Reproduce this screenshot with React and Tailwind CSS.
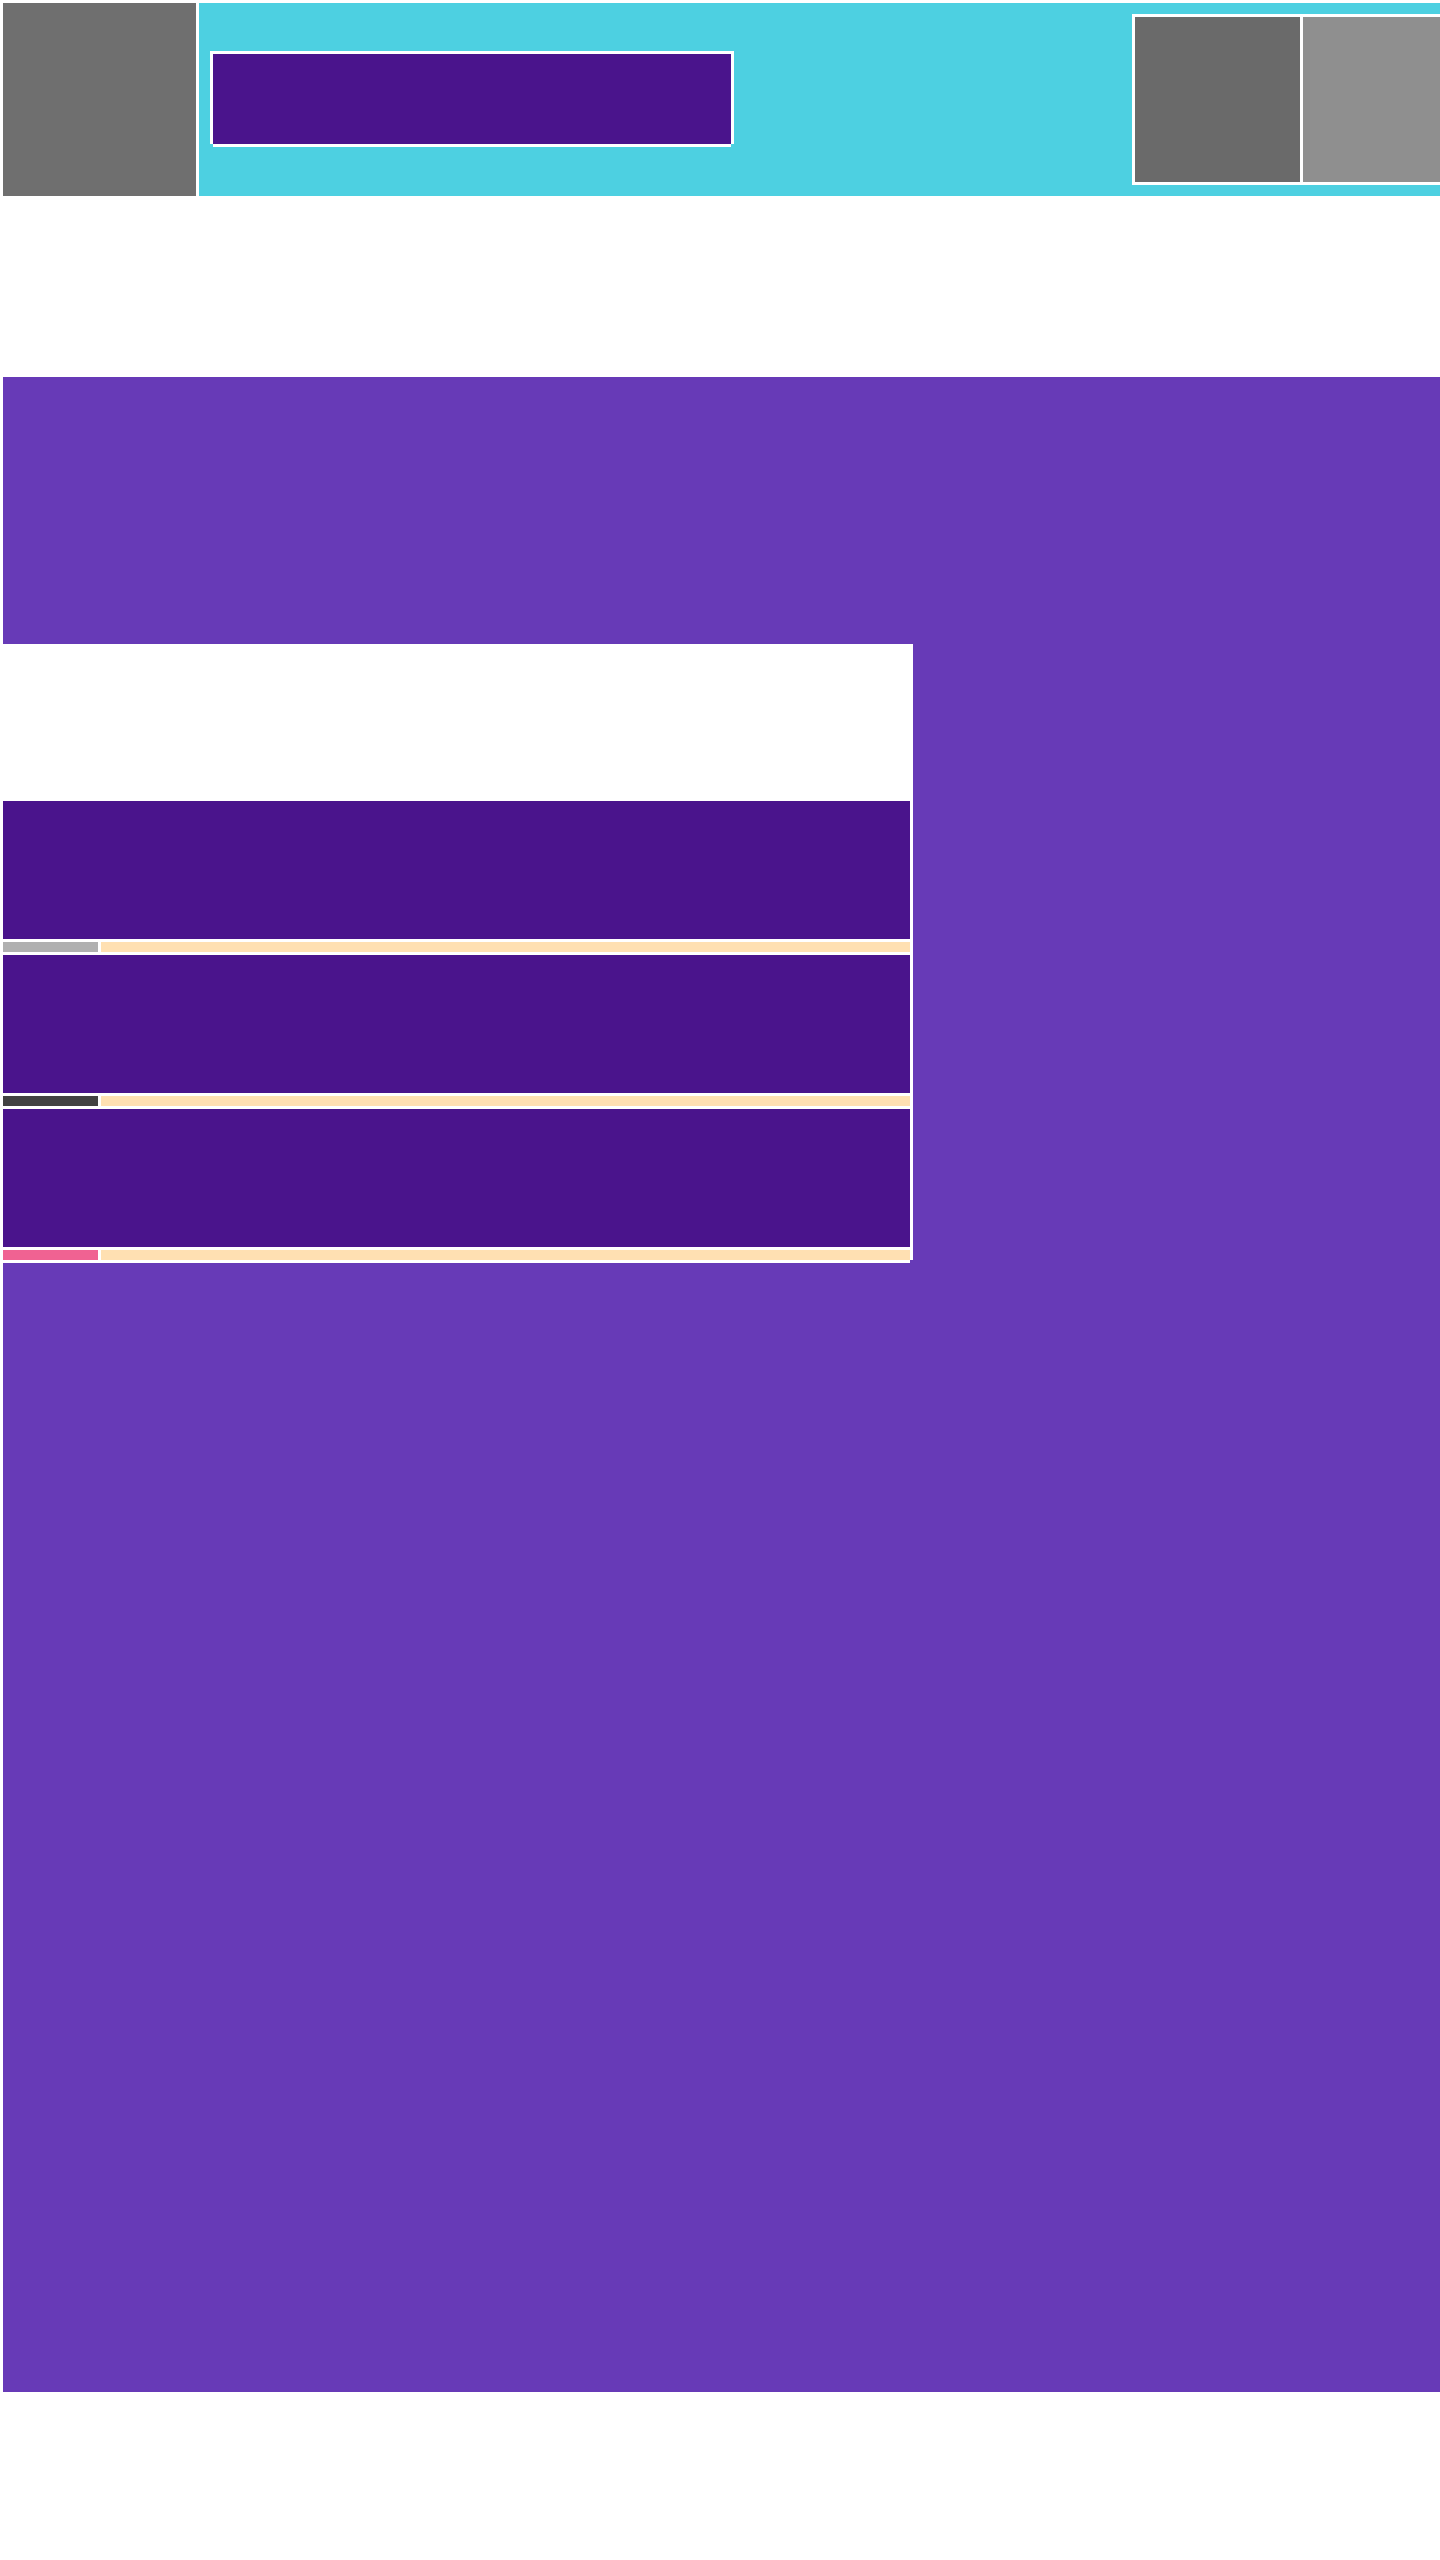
export default function App() {
  return (
    <div className="w-[1440px] overflow-hidden bg-white pl-[3px] pt-[3px] pb-[168px]">
      <Header />
      <div className="h-[181px]" />
      <Section />
    </div>
  );
}

function Header() {
  return (
    <header className="flex h-[193px] gap-[3px]">
      <div className="w-[193px] shrink-0 bg-[#6f6f6f]" />
      <div className="flex flex-1 items-start overflow-hidden bg-[#4dd0e1]">
        {/* search-ish box */}
        <div className="ml-[11px] mt-[48px] h-[93px] w-[524px] shrink-0 bg-white px-[3px] pt-[3px]">
          <div className="h-[93px] border-b-[3px] border-white bg-[#4a148c]" />
        </div>
        {/* right thumbnails */}
        <div className="ml-[398px] mt-[11px] flex shrink-0 gap-[3px] border-[3px] border-white bg-white">
          <div className="h-[165px] w-[165px] bg-[#6a6a6a]" />
          <div className="h-[165px] w-[165px] bg-[#8f8f8f]" />
        </div>
      </div>
    </header>
  );
}

const rows = [
  { tag: "bg-[#b0b0b0]" },
  { tag: "bg-[#424242]" },
  { tag: "bg-[#f06292]" },
];

function Section() {
  return (
    <section className="h-[2015px] bg-[#673ab7] pt-[267px]">
      <div className="h-[616px] w-[910px] bg-white pr-[3px]">
        <div className="flex flex-col gap-[3px] bg-white pb-[3px]">
          <div className="h-[154px]" />
          {rows.map((row, i) => (
            <div key={i} className="flex flex-col gap-[3px]">
              <div className="h-[138px] bg-[#4a148c]" />
              <div className="flex h-[10px] gap-[3px]">
                <div className={`w-[95px] ${row.tag}`} />
                <div className="flex-1 bg-[#ffe0b2]" />
              </div>
            </div>
          ))}
        </div>
      </div>
    </section>
  );
}
